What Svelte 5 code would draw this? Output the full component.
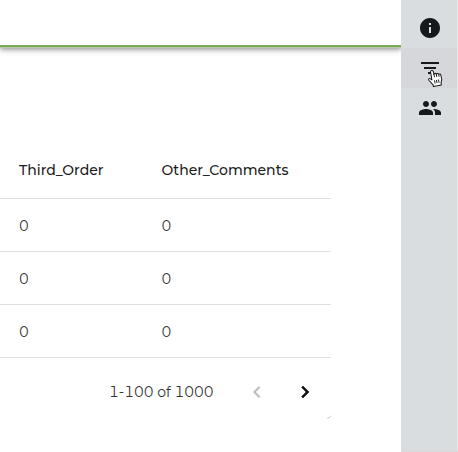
<script>
  const rows = [[0, 0], [0, 0], [0, 0]];
</script>

<div class="app">
  <main>
    <header></header>
    <section class="card">
      <div class="row head">
        <span class="first"><b>Third_Order</b></span>
        <span><b>Other_Comments</b></span>
      </div>
      {#each rows as row}
        <div class="row body">
          <span class="first">{row[0]}</span>
          <span>{row[1]}</span>
        </div>
      {/each}
      <footer>
        <span class="range">1-100 of 1000</span>
        <button class="prev" aria-label="Previous page">
          <svg viewBox="0 0 24 24"><path d="M15.41 7.41 14 6l-6 6 6 6 1.41-1.41L10.83 12z" /></svg>
        </button>
        <button class="next" aria-label="Next page">
          <svg viewBox="0 0 24 24"><path d="M10 6 8.59 7.41 13.17 12l-4.58 4.59L10 18l6-6z" /></svg>
        </button>
        <svg class="corner" viewBox="0 0 5 4"><path d="M.3 3.2Q2.6 2.8 4.1.7" /></svg>
      </footer>
    </section>
  </main>
  <aside>
    <button aria-label="Information">
      <svg viewBox="0 0 24 24"><path d="M12 2C6.48 2 2 6.48 2 12s4.48 10 10 10 10-4.48 10-10S17.52 2 12 2zm1 15h-2v-6h2v6zm0-8h-2V7h2v2z" /></svg>
    </button>
    <button class="hover" aria-label="Filter">
      <svg viewBox="0 0 24 24"><path d="M10 18h4v-2h-4v2zM3 6v2h18V6H3zm3 7h12v-2H6v2z" /></svg>
      <svg class="cursor" viewBox="0 0 15 18">
        <path d="M4.1 10.2 3 8.9C2.2 7.8.5 8.5 1 9.9l3.2 5.4v1.8h8.1v-1.9l1.5-3.4V7.1c0-1.4-1.9-1.5-2-.2V6c-.2-1.3-2.2-1.2-2.3 0v-.6c-.2-1.3-2.2-1.2-2.3 0V2.1C7 .5 4.5.5 4.4 2.1z" />
        <path class="fingers" d="M7.2 5.4v2.8M9.5 6v2.3M11.8 7v1.6M6.5 11.2v3.2M8.5 11.2v3.2M10.5 11.2v3.2" />
      </svg>
    </button>
    <button aria-label="People">
      <svg viewBox="0 0 24 24"><path d="M16 11c1.66 0 2.99-1.34 2.99-3S17.66 5 16 5s-3 1.34-3 3 1.34 3 3 3zm-8 0c1.66 0 2.99-1.34 2.99-3S9.66 5 8 5 5 6.34 5 8s1.34 3 3 3zm0 2c-2.33 0-7 1.17-7 3.5V19h14v-2.5c0-2.33-4.67-3.5-7-3.5zm8 0c-.29 0-.62.02-.97.05 1.16.84 1.97 1.97 1.97 3.45V19h6v-2.5c0-2.33-4.67-3.5-7-3.5z" /></svg>
    </button>
  </aside>
</div>

<style>
  :global(body) { margin: 0; overflow: hidden; background: #fff; }
  .app {
    display: flex;
    width: 458px;
    height: 452px;
    overflow: hidden;
    font-family: Montserrat, "Inter", "Open Sans", sans-serif;
    font-size: 14px;
    font-variant-numeric: tabular-nums;
    color: #333;
  }
  main { width: 401px; overflow: hidden; }
  header {
    box-sizing: border-box;
    height: 47px;
    border-bottom: 2px solid #7dab59;
    box-shadow: 0 1px 0 #b5c8a6, 0 2px 4px rgba(0, 0, 0, .3), 0 4px 6px rgba(0, 0, 0, .16);
  }
  .card { width: 331px; margin-top: 95px; }
  .row {
    display: flex;
    align-items: center;
    box-sizing: border-box;
    height: 53px;
    padding-left: 19px;
    border-bottom: 1px solid #e0e0e0;
  }
  .head { height: 57px; color: #1c1c1c; }
  .body { padding-top: 1px; }
  .first { width: 142.5px; }
  b { font-weight: 500; letter-spacing: 0; }
  footer { position: relative; display: flex; align-items: center; height: 68px; padding-left: 109px; }
  .range { width: 136px; white-space: nowrap; }
  button { padding: 0; border: 0; background: none; }
  button svg { display: block; width: 24px; height: 24px; }
  .prev { margin-right: 24px; fill: #bcbcbc; }
  .next { fill: #111; stroke: #111; stroke-width: .6; }
  .corner { position: absolute; left: 327px; top: 57px; width: 5px; height: 4px; fill: none; stroke: #c5c5c5; }
  aside {
    position: relative;
    box-sizing: border-box;
    width: 57px;
    padding-top: 8px;
    background: #d9dde0;
    border-right: 1px solid #e7e9ea;
    border-bottom: 2px solid #d9dadc;
  }
  aside button { position: relative; display: flex; align-items: center; justify-content: center; width: 56px; height: 40px; padding-left: 2px; fill: #15191c; }
  .hover { background: #d5d7da; }
  .cursor { position: absolute; left: 26px; top: 21px; width: 16px; height: 18px; fill: #fff; stroke: #171717; stroke-width: 1; stroke-linejoin: round; transform: rotate(-12deg); }
  .fingers { fill: none; stroke-width: .9; }
</style>
